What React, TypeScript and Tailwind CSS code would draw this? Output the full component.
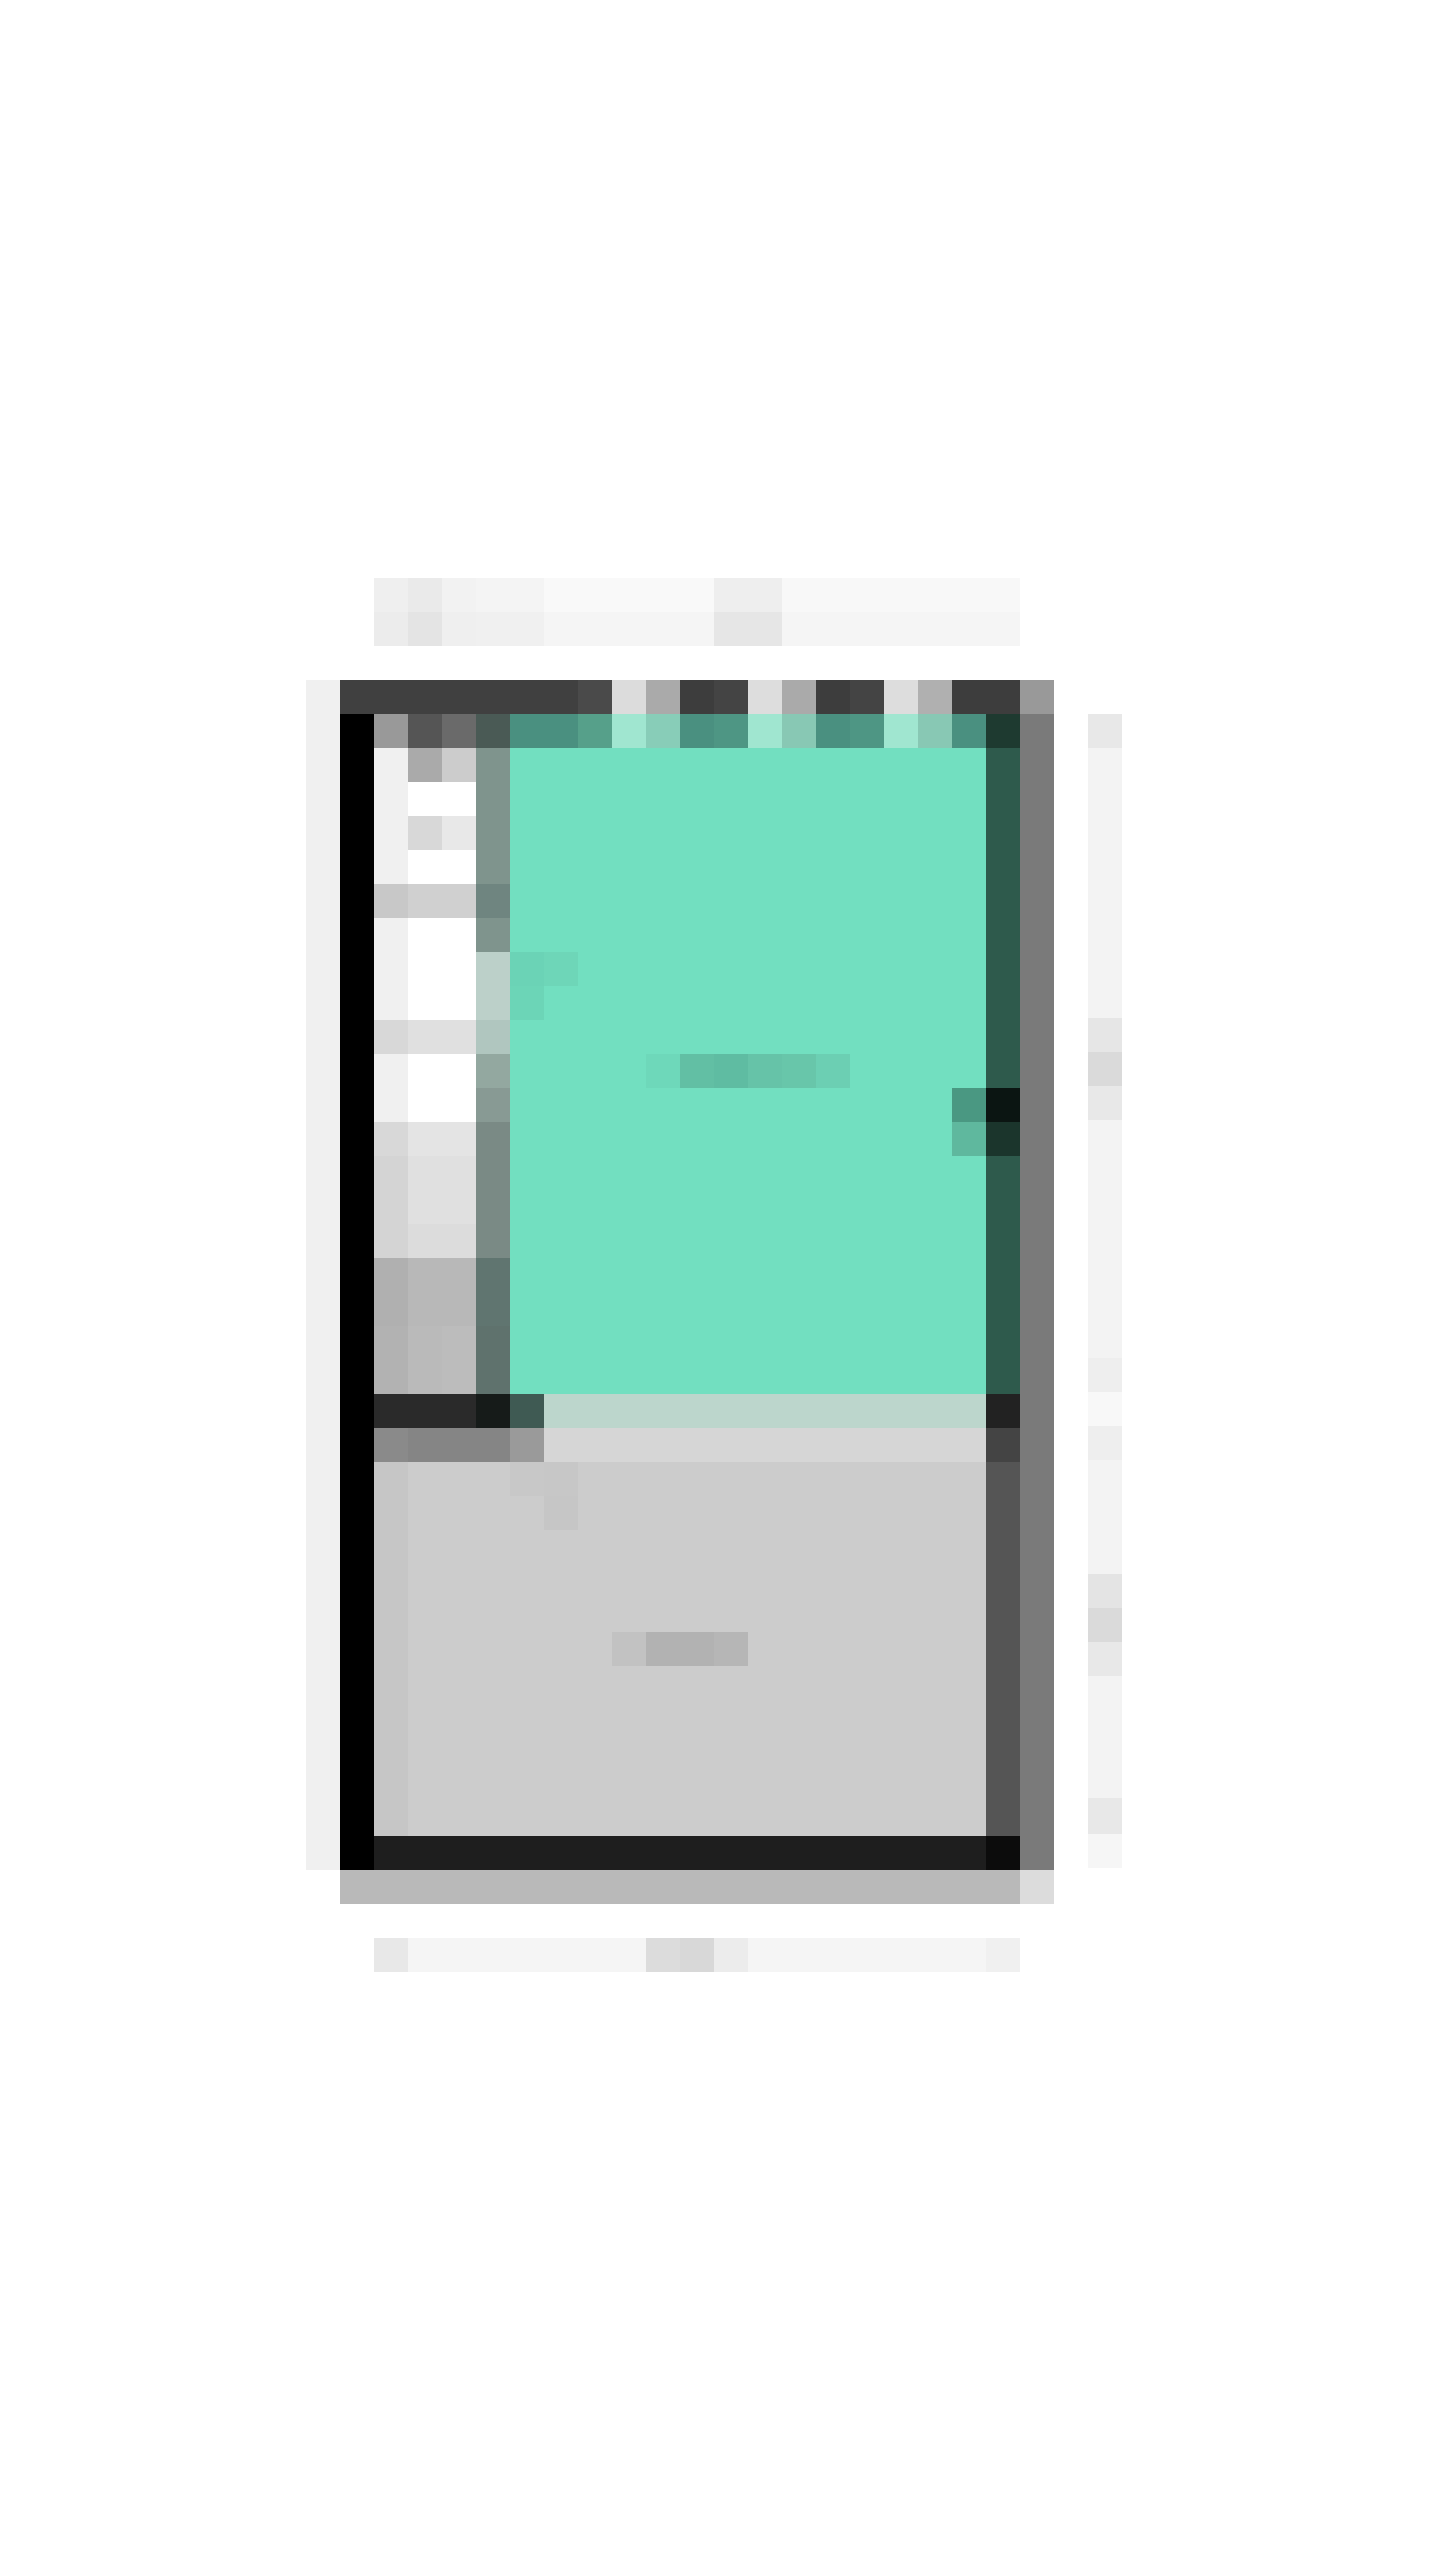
import React from 'react'

// One square of the thumbnail grid (34px). Pass a width class for runs of equal cells.
function Cell({ c, w = 'w-[34px]', h = 'h-[34px]' }: { c: string; w?: string; h?: string }): React.JSX.Element {
  return <div className={`${w} ${h} shrink-0 ${c}`} />
}

function Strip({ cells }: { cells: Array<[string, string?]> }): React.JSX.Element {
  return (
    <div className="flex">
      {cells.map(([c, w], i) => (
        <Cell key={i} c={c} w={w} />
      ))}
    </div>
  )
}

const SIDEBAR_ROWS: Array<[string, string, string, string]> = [
  ['bg-[#f0f0f0]', 'bg-[#aaaaaa]', 'bg-[#cccccc]', 'bg-[#7f948d]'],
  ['bg-[#f0f0f0]', 'bg-[#ffffff]', 'bg-[#ffffff]', 'bg-[#7f948d]'],
  ['bg-[#f0f0f0]', 'bg-[#d8d8d8]', 'bg-[#e8e8e8]', 'bg-[#7f948d]'],
  ['bg-[#f0f0f0]', 'bg-[#ffffff]', 'bg-[#ffffff]', 'bg-[#7f948d]'],
  ['bg-[#c8c8c8]', 'bg-[#d0d0d0]', 'bg-[#d0d0d0]', 'bg-[#6f8580]'],
  ['bg-[#f0f0f0]', 'bg-[#ffffff]', 'bg-[#ffffff]', 'bg-[#7f948d]'],
  ['bg-[#f0f0f0]', 'bg-[#ffffff]', 'bg-[#ffffff]', 'bg-[#bcd0c9]'],
  ['bg-[#f0f0f0]', 'bg-[#ffffff]', 'bg-[#ffffff]', 'bg-[#bcd0c9]'],
  ['bg-[#d8d8d8]', 'bg-[#e0e0e0]', 'bg-[#e0e0e0]', 'bg-[#b0c6bf]'],
  ['bg-[#f0f0f0]', 'bg-[#ffffff]', 'bg-[#ffffff]', 'bg-[#93a8a0]'],
  ['bg-[#f0f0f0]', 'bg-[#ffffff]', 'bg-[#ffffff]', 'bg-[#889a94]'],
  ['bg-[#d8d8d8]', 'bg-[#e4e4e4]', 'bg-[#e4e4e4]', 'bg-[#7a8a85]'],
  ['bg-[#d4d4d4]', 'bg-[#e0e0e0]', 'bg-[#e0e0e0]', 'bg-[#7a8a85]'],
  ['bg-[#d4d4d4]', 'bg-[#e0e0e0]', 'bg-[#e0e0e0]', 'bg-[#7a8a85]'],
  ['bg-[#d4d4d4]', 'bg-[#dcdcdc]', 'bg-[#dcdcdc]', 'bg-[#7a8a85]'],
  ['bg-[#b0b0b0]', 'bg-[#b8b8b8]', 'bg-[#b8b8b8]', 'bg-[#607570]'],
  ['bg-[#b0b0b0]', 'bg-[#b8b8b8]', 'bg-[#b8b8b8]', 'bg-[#607570]'],
  ['bg-[#b2b2b2]', 'bg-[#bababa]', 'bg-[#bcbcbc]', 'bg-[#5f726d]'],
  ['bg-[#b2b2b2]', 'bg-[#bababa]', 'bg-[#bcbcbc]', 'bg-[#5f726d]']
]

const RIGHT_RAIL: Array<[string, string]> = [
  ['bg-[#e8e8e8]', 'h-[34px]'],
  ['bg-[#f3f3f3]', 'h-[270px]'],
  ['bg-[#e6e6e6]', 'h-[34px]'],
  ['bg-[#dadada]', 'h-[34px]'],
  ['bg-[#e8e8e8]', 'h-[34px]'],
  ['bg-[#f3f3f3]', 'h-[238px]'],
  ['bg-[#eeeeee]', 'h-[34px]'],
  ['bg-[#f8f8f8]', 'h-[34px]'],
  ['bg-[#eeeeee]', 'h-[34px]'],
  ['bg-[#f3f3f3]', 'h-[114px]'],
  ['bg-[#e4e4e4]', 'h-[34px]'],
  ['bg-[#dadada]', 'h-[34px]'],
  ['bg-[#e8e8e8]', 'h-[34px]'],
  ['bg-[#f3f3f3]', 'h-[122px]'],
  ['bg-[#e8e8e8]', 'h-[36px]'],
  ['bg-[#f6f6f6]', 'h-[34px]']
]

function Sidebar(): React.JSX.Element {
  return (
    <div className="flex w-[136px] shrink-0 flex-col">
      {SIDEBAR_ROWS.map((row, i) => (
        <div key={i} className="flex">
          {row.map((c, j) => (
            <Cell key={j} c={c} />
          ))}
        </div>
      ))}
    </div>
  )
}

function Preview(): React.JSX.Element {
  return (
    <div className="flex w-[476px] shrink-0 flex-col bg-[#72dfc0]">
      <div className="h-[204px]" />
      <div className="flex h-[68px]">
        <div className="flex flex-col">
          <Cell c="bg-[#6bd3b6]" />
          <Cell c="bg-[#6cd5b7]" />
        </div>
        <Cell c="bg-[#6ed6b8]" />
      </div>
      <div className="h-[34px]" />
      <div className="ml-[136px] flex">
        <Cell c="bg-[#6ed8ba]" />
        <Cell c="bg-[#62bfa4]" />
        <Cell c="bg-[#5fbca2]" />
        <Cell c="bg-[#66c3a8]" />
        <Cell c="bg-[#68c6aa]" />
        <Cell c="bg-[#6ccfb3]" />
      </div>
      <div className="flex justify-end">
        <div className="flex flex-col">
          <Cell c="bg-[#4a9882]" />
          <Cell c="bg-[#5fb89e]" />
        </div>
      </div>
    </div>
  )
}

function LowerPanel(): React.JSX.Element {
  return (
    <div className="flex h-[374px]">
      <div className="w-[34px] shrink-0 bg-[#c6c6c6]" />
      <div className="flex flex-1 flex-col bg-[#cccccc]">
        <div className="ml-[102px] flex">
          <Cell c="bg-[#c8c8c8]" />
          <Cell c="bg-[#c7c7c7]" />
        </div>
        <div className="ml-[136px] flex">
          <Cell c="bg-[#c6c6c6]" />
        </div>
        <div className="h-[102px]" />
        <div className="ml-[204px] flex">
          <Cell c="bg-[#c2c2c2]" />
          <Cell c="bg-[#b2b2b2]" w="w-[68px]" />
          <Cell c="bg-[#b6b6b6]" />
        </div>
      </div>
    </div>
  )
}

function Window(): React.JSX.Element {
  return (
    <div className="flex w-[714px] shrink-0 flex-col">
      <Strip
        cells={[
          ['bg-[#404040]', 'w-[238px]'],
          ['bg-[#4a4a4a]'],
          ['bg-[#dcdcdc]'],
          ['bg-[#aaaaaa]'],
          ['bg-[#3d3d3d]'],
          ['bg-[#444444]'],
          ['bg-[#dddddd]'],
          ['bg-[#aaaaaa]'],
          ['bg-[#3d3d3d]'],
          ['bg-[#444444]'],
          ['bg-[#dddddd]'],
          ['bg-[#b0b0b0]'],
          ['bg-[#3d3d3d]', 'w-[68px]'],
          ['bg-[#999999]']
        ]}
      />
      <div className="flex h-[1156px]">
        <div className="w-[34px] shrink-0 bg-black" />
        <div className="flex w-[612px] shrink-0 flex-col">
          <Strip
            cells={[
              ['bg-[#999999]'],
              ['bg-[#555555]'],
              ['bg-[#6a6a6a]'],
              ['bg-[#4a5a55]'],
              ['bg-[#4a9080]', 'w-[68px]'],
              ['bg-[#56a08a]'],
              ['bg-[#a0e6d0]'],
              ['bg-[#88cdb8]'],
              ['bg-[#4a9080]'],
              ['bg-[#4e9684]'],
              ['bg-[#a0e6d0]'],
              ['bg-[#88c8b4]'],
              ['bg-[#4a9080]'],
              ['bg-[#4e9684]'],
              ['bg-[#a0e6d0]'],
              ['bg-[#88c8b4]'],
              ['bg-[#4a9080]']
            ]}
          />
          <div className="flex h-[646px]">
            <Sidebar />
            <Preview />
          </div>
          <Strip
            cells={[
              ['bg-[#2a2a2a]', 'w-[102px]'],
              ['bg-[#161b19]'],
              ['bg-[#3f5a53]'],
              ['bg-[#bcd6cc]', 'w-[442px]']
            ]}
          />
          <Strip
            cells={[
              ['bg-[#8a8a8a]'],
              ['bg-[#858585]', 'w-[102px]'],
              ['bg-[#9a9a9a]'],
              ['bg-[#d6d6d6]', 'w-[442px]']
            ]}
          />
          <LowerPanel />
          <Cell c="bg-[#1e1e1e]" w="w-[612px]" />
        </div>
        <div className="flex w-[34px] shrink-0 flex-col">
          <Cell c="bg-[#1e3a30]" />
          <Cell c="bg-[#2e5a4c]" h="h-[340px]" />
          <Cell c="bg-[#0b1512]" />
          <Cell c="bg-[#1b352c]" />
          <Cell c="bg-[#2e5a4c]" h="h-[238px]" />
          <Cell c="bg-[#222222]" />
          <Cell c="bg-[#444444]" />
          <Cell c="bg-[#555555]" h="h-[374px]" />
          <Cell c="bg-[#0c0c0c]" />
        </div>
        <div className="w-[34px] shrink-0 bg-[#7a7a7a]" />
      </div>
    </div>
  )
}

export default function App(): React.JSX.Element {
  return (
    <div className="h-[2560px] w-[1440px] overflow-hidden bg-white">
      <div className="flex flex-col pl-[306px] pt-[578px]">
        <div className="ml-[68px] flex flex-col">
          <Strip
            cells={[
              ['bg-[#efefef]'],
              ['bg-[#eaeaea]'],
              ['bg-[#f2f2f2]'],
              ['bg-[#f4f4f4]', 'w-[68px]'],
              ['bg-[#f9f9f9]', 'w-[170px]'],
              ['bg-[#eeeeee]', 'w-[68px]'],
              ['bg-[#f8f8f8]', 'w-[238px]']
            ]}
          />
          <Strip
            cells={[
              ['bg-[#ececec]'],
              ['bg-[#e4e4e4]'],
              ['bg-[#efefef]'],
              ['bg-[#f0f0f0]', 'w-[68px]'],
              ['bg-[#f5f5f5]', 'w-[170px]'],
              ['bg-[#e6e6e6]', 'w-[68px]'],
              ['bg-[#f5f5f5]', 'w-[238px]']
            ]}
          />
        </div>
        <div className="h-[34px]" />
        <div className="flex h-[1190px]">
          <div className="w-[34px] shrink-0 bg-[#f0f0f0]" />
          <Window />
          <div className="w-[34px] shrink-0" />
          <div className="flex w-[34px] shrink-0 flex-col pt-[34px]">
            {RIGHT_RAIL.map(([c, h], i) => (
              <Cell key={i} c={c} h={h} />
            ))}
          </div>
        </div>
        <div className="ml-[34px] flex">
          <Cell c="bg-[#b9b9b9]" w="w-[680px]" />
          <Cell c="bg-[#dcdcdc]" />
        </div>
        <div className="h-[34px]" />
        <div className="ml-[68px]">
          <Strip
            cells={[
              ['bg-[#e8e8e8]'],
              ['bg-[#f5f5f5]', 'w-[238px]'],
              ['bg-[#dcdcdc]'],
              ['bg-[#d8d8d8]'],
              ['bg-[#ececec]'],
              ['bg-[#f5f5f5]', 'w-[238px]'],
              ['bg-[#f0f0f0]']
            ]}
          />
        </div>
      </div>
    </div>
  )
}
